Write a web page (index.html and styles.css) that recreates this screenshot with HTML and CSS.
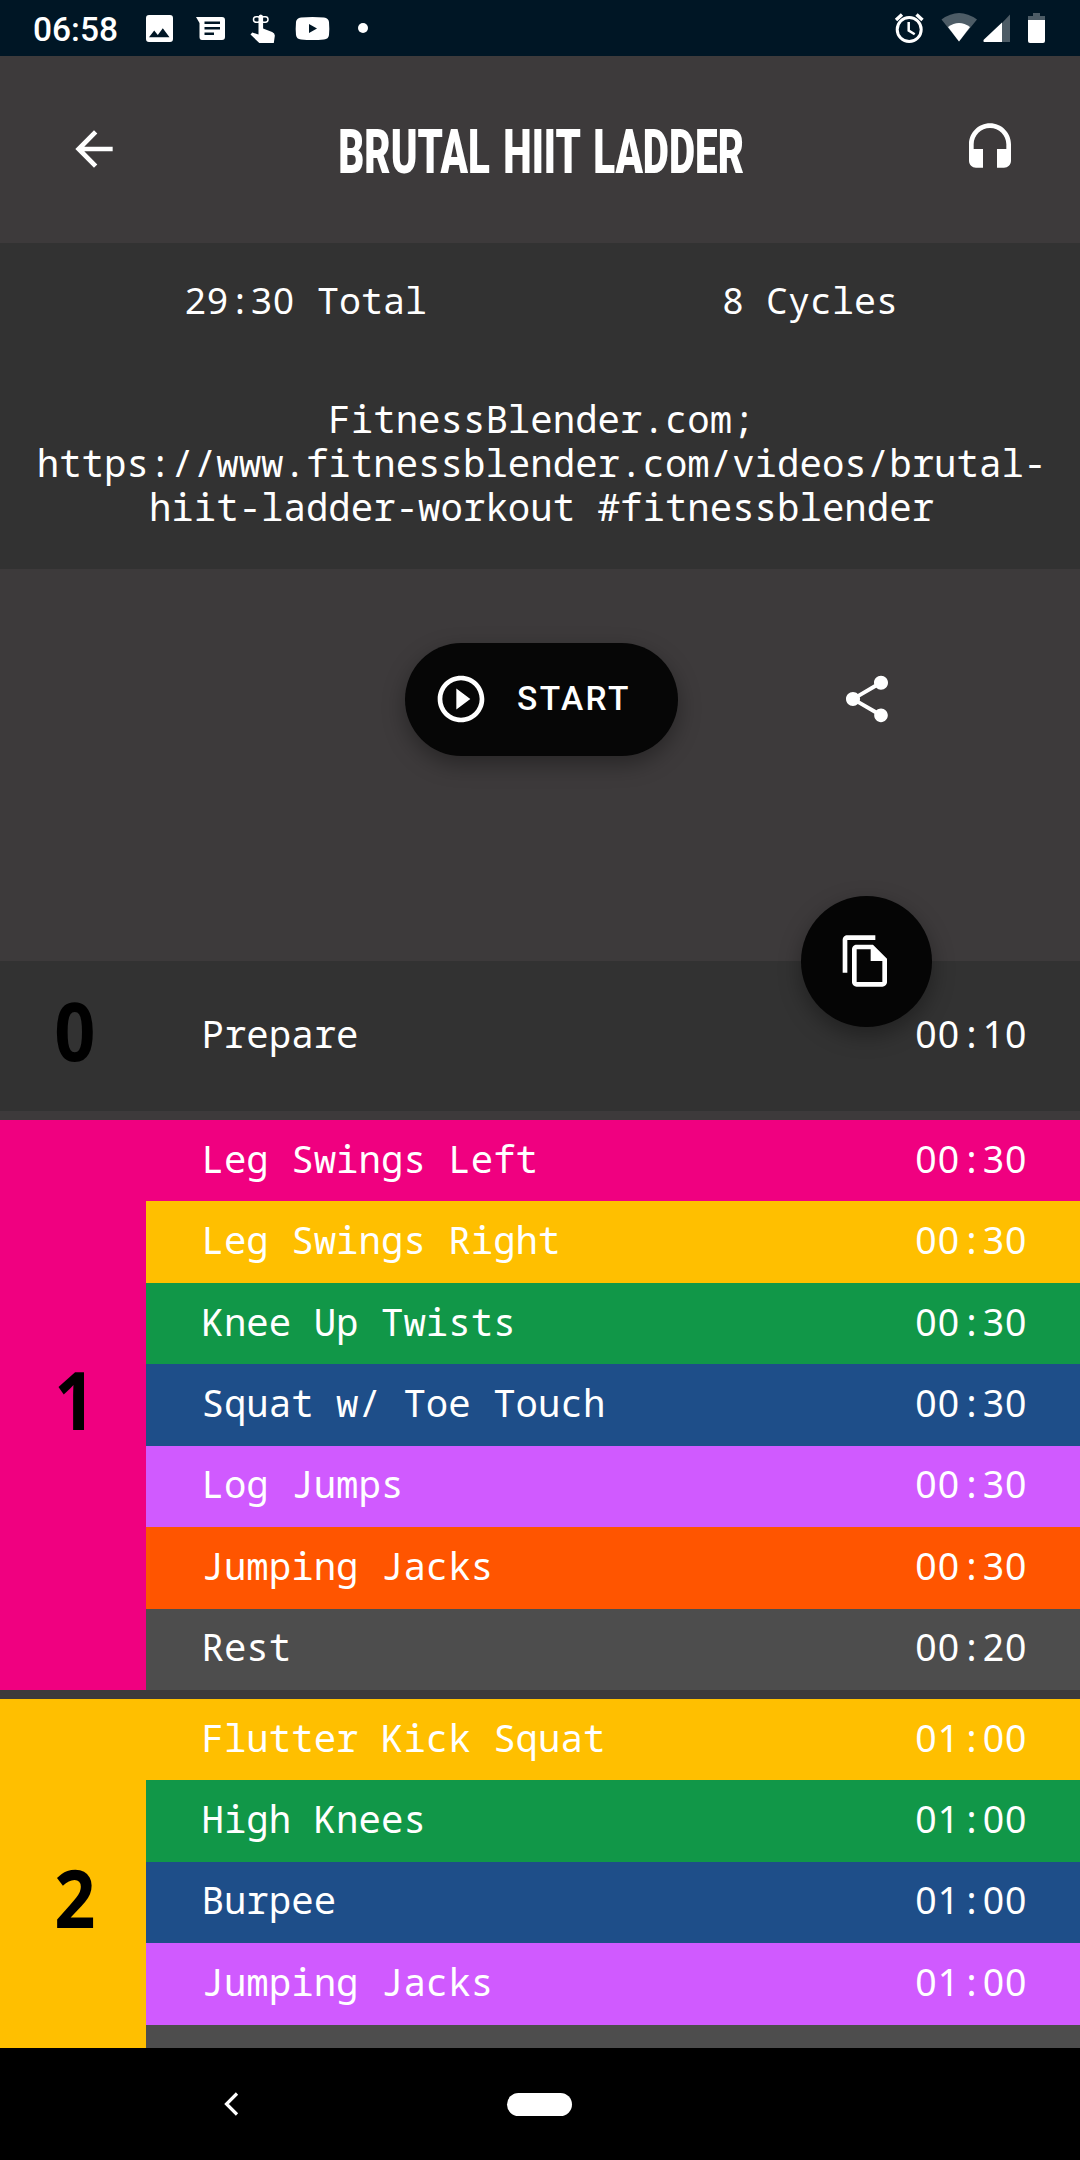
FILE: index.html
```html
<!DOCTYPE html>
<html lang="en">
<head>
<meta charset="utf-8">
<title>Brutal HIIT Ladder</title>
<link rel="stylesheet" href="styles.css">
</head>
<body>
<div class="status">
  <span class="clock">06:58</span>
  <svg class="notif" width="300" height="56" viewBox="140 0 300 56">
    <path fill-rule="evenodd" d="M149 15h21q3 0 3 3v21q0 3-3 3h-21q-3 0-3-3V18q0-3 3-3zM149 37.300h20.500l-6.700-9-5 6.600-3.600-4.300z"/>
    <path fill-rule="evenodd" d="M196 17h26q3 0 3 3v17q0 3-3 3h-20q-2.500 0-2.500-3V23zM204.500 21.500v2.500h15.500v-2.500zM204.500 27v2.500h15.500v-2.500zM204.500 32.500v2.500h9.500v-2.500z"/>
    <path d="M258.500 22v-5q0-2.500 2.300-2.500t2.300 2.500v11.500l9 3.500q3 1.200 2.700 4l-1 7h-14.500l-8.800-8.500 1.800-2 6.200 2z"/>
    <g fill="none" stroke="#fff" stroke-width="1.500"><rect x="253.500" y="16.800" width="7" height="5.500" rx="2.700"/><rect x="261" y="16.800" width="7" height="5.500" rx="2.700"/></g>
    <path fill-rule="evenodd" d="M301 17.500q11.500-1 23 0 4.500.5 5 4.500.6 6.500 0 13-.5 4-5 4.500-11.500 1-23 0-4.500-.5-5-4.500-.6-6.500 0-13 .5-4 5-4.500zM309 24v9l8-4.500z"/>
    <circle cx="363" cy="28" r="5"/>
  </svg>
  <svg class="system" width="160" height="56" viewBox="890 0 160 56">
    <g fill="none" stroke="#fff" stroke-width="3"><circle cx="909.200" cy="29.500" r="12"/><path d="M896 20l6-5.500M922.500 20l-6-5.500" stroke-width="3.400"/><path d="M908.700 22v8.500l6 3.700" stroke-width="2.500"/></g>
    <path fill="#4d5c66" d="M941.500 19.500q17.500-13 35.500 0L959 41.500z"/>
    <path d="M948 27q11-8 22 0l-11 14.500z"/>
    <path fill="#4d5c66" d="M1002 23l8-8.500V42h-8z"/>
    <path d="M1002 22.500V42h-18q-1.500-1 0-2.500z"/>
    <path fill="#4d5c66" d="M1033 13h7v3h5v4h-17v-4h5z"/>
    <path d="M1028 20h17v21q0 2-2 2h-13q-2 0-2-2z"/>
  </svg>
</div>

<header class="appbar">
  <svg class="icon" viewBox="0 0 24 24"><path d="M20 11H7.830l5.590-5.590L12 4l-8 8 8 8 1.410-1.410L7.830 13H20v-2z"/></svg>
  <h1 class="title">BRUTAL HIIT LADDER</h1>
  <svg class="icon" viewBox="0 0 24 24"><path d="M12 1c-4.970 0-9 4.030-9 9v7c0 1.660 1.340 3 3 3h3v-8H5v-2c0-3.870 3.130-7 7-7s7 3.130 7 7v2h-4v8h3c1.660 0 3-1.340 3-3v-7c0-4.970-4.030-9-9-9z"/></svg>
</header>

<section class="info">
  <div class="stats"><span><b class="time">29<i>:</i>30</b> Total</span><span>8 Cycles</span></div>
  <p class="desc">FitnessBlender.com;<br>https://www.fitnessblender.com/videos/brutal-<br>hiit-ladder-workout #fitnessblender</p>
</section>

<section class="actions">
  <div class="start"><svg class="icon" viewBox="0 0 24 24"><path d="M10 16.500l6-4.500-6-4.500v9zM12 2C6.480 2 2 6.480 2 12s4.480 10 10 10 10-4.480 10-10S17.520 2 12 2zm0 18c-4.410 0-8-3.590-8-8s3.590-8 8-8 8 3.590 8 8-3.590 8-8 8z"/></svg><span>START</span></div>
  <svg class="icon share" viewBox="0 0 24 24"><path d="M18 16.080c-.76 0-1.440.3-1.960.77L8.910 12.700c.05-.23.09-.46.09-.7s-.04-.47-.09-.7l7.050-4.110c.54.5 1.250.81 2.040.81 1.660 0 3-1.340 3-3s-1.340-3-3-3-3 1.340-3 3c0 .24.04.47.09.7L8.040 9.810C7.500 9.310 6.790 9 6 9c-1.660 0-3 1.340-3 3s1.340 3 3 3c.79 0 1.500-.31 2.040-.81l7.120 4.160c-.05.21-.08.43-.08.65 0 1.610 1.310 2.920 2.920 2.920s2.920-1.310 2.920-2.920-1.310-2.920-2.920-2.920z"/></svg>
</section>

<main class="sets">
  <div class="fab"><svg class="icon" viewBox="0 0 24 24"><path fill-rule="evenodd" d="M16 1H4c-1.100 0-2 .9-2 2v14h2V3h12zM15 5l6 6v10c0 1.100-.9 2-2 2H8c-1.100 0-2-.9-2-2V7c0-1.100.9-2 2-2zM14 7H8v14h11v-9h-5z"/></svg></div>
  <section class="set prepare">
    <div class="num"><span>0</span></div>
    <div class="rows"><div class="row"><span>Prepare</span><b class="time">00<i>:</i>10</b></div></div>
  </section>
  <section class="set pink seven">
    <div class="num"><span>1</span></div>
    <div class="rows">
      <div class="row pink"><span>Leg Swings Left</span><b class="time">00<i>:</i>30</b></div>
      <div class="row yellow"><span>Leg Swings Right</span><b class="time">00<i>:</i>30</b></div>
      <div class="row green"><span>Knee Up Twists</span><b class="time">00<i>:</i>30</b></div>
      <div class="row blue"><span>Squat w/ Toe Touch</span><b class="time">00<i>:</i>30</b></div>
      <div class="row purple"><span>Log Jumps</span><b class="time">00<i>:</i>30</b></div>
      <div class="row orange"><span>Jumping Jacks</span><b class="time">00<i>:</i>30</b></div>
      <div class="row rest"><span>Rest</span><b class="time">00<i>:</i>20</b></div>
    </div>
  </section>
  <section class="set yellow five">
    <div class="num"><span>2</span></div>
    <div class="rows">
      <div class="row yellow"><span>Flutter Kick Squat</span><b class="time">01<i>:</i>00</b></div>
      <div class="row green"><span>High Knees</span><b class="time">01<i>:</i>00</b></div>
      <div class="row blue"><span>Burpee</span><b class="time">01<i>:</i>00</b></div>
      <div class="row purple"><span>Jumping Jacks</span><b class="time">01<i>:</i>00</b></div>
      <div class="row rest"></div>
    </div>
  </section>
</main>

<nav class="navbar">
  <svg class="back" width="20" height="28" viewBox="0 0 20 28"><path d="M16 3.500L5.500 14 16 24.500" fill="none" stroke="#fff" stroke-width="3.200"/></svg>
  <span class="home"></span>
</nav>
</body>
</html>
```

FILE: styles.css
```css
* { box-sizing: border-box; }
body {
  margin: 0;
  width: 1080px;
  height: 2160px;
  overflow: hidden;
  display: flex;
  flex-direction: column;
  background: #3d3a3b;
  color: #fff;
  font-family: "Droid Sans Mono", "Noto Sans Mono", "DejaVu Sans Mono", monospace;
  font-size: 37.400px;
  line-height: 44px;
}
svg { display: block; fill: #fff; flex: none; }
.icon { width: 56px; height: 56px; }
.status {
  height: 56px;
  flex: none;
  display: flex;
  background: #001625;
  padding: 0 30px 0 33px;
}
.clock {
  width: 107px;
  font: 500 33.500px/60px Roboto, sans-serif;
}
.system { margin-left: auto; }
.appbar {
  height: 187px;
  flex: none;
  display: flex;
  justify-content: space-between;
  align-items: flex-start;
  padding: 65px 62px 0 66px;
}
.title {
  margin: 2px 0 0;
  font: 900 60.500px/60px Roboto, sans-serif;
  white-space: nowrap;
  word-spacing: 5px;
  transform: translateX(-1px) scaleX(.667);
}
.time {
  font-family: "Noto Sans", sans-serif;
  font-weight: 400;
  letter-spacing: .028em;
}
.time i {
  display: inline-block;
  width: .6em;
  text-align: center;
  font-style: normal;
  letter-spacing: 0;
}
.info {
  height: 326px;
  flex: none;
  background: #323232;
}
.stats {
  display: flex;
  padding: 35px 18px 0 54px;
  font-size: 36.700px;
}
.stats span { flex: 1; text-align: center; }
.desc { margin: 75px -3px 0 0; text-align: center; }
.actions {
  height: 392px;
  flex: none;
  display: flex;
  align-items: flex-start;
  padding: 74px 0 0 405px;
}
.start {
  width: 273px;
  height: 113px;
  display: flex;
  align-items: center;
  gap: 28px;
  padding: 0 0 2px 28px;
  border-radius: 57px;
  background: #060606;
  box-shadow: 0 8px 22px rgba(0, 0, 0, .35);
  font: 500 33.500px/40px Roboto, sans-serif;
  letter-spacing: 2.400px;
}
.share { margin: 28px 0 0 161px; }
.sets {
  position: relative;
  height: 1087px;
  flex: none;
  display: flex;
  flex-direction: column;
  gap: 9px;
}
.fab {
  position: absolute;
  left: 801px;
  top: -65px;
  width: 131px;
  height: 131px;
  border-radius: 50%;
  display: flex;
  align-items: center;
  justify-content: center;
  padding: 0 2px 2px 0;
  background: #050505;
  box-shadow: 0 8px 22px rgba(0, 0, 0, .35);
}
.set { display: flex; flex: none; }
.prepare { height: 150px; background: #323232; }
.seven { height: 570px; }
.five { height: 407px; }
.num {
  width: 146px;
  display: flex;
  align-items: center;
  justify-content: center;
  padding: 0 0 12px 3px;
  color: #000;
  font: 700 80px/80px "Noto Sans", sans-serif;
}
.num span { transform: scaleX(.9); }
.rows { flex: 1; display: grid; grid-auto-rows: 1fr; }
.row {
  display: flex;
  align-items: center;
  justify-content: space-between;
  padding: 0 52.500px 4px 55.500px;
}
.pink { background: #f00080; }
.yellow { background: #ffbf00; }
.green { background: #119748; }
.blue { background: #1e4e89; }
.purple { background: #d05aff; }
.orange { background: #ff5500; }
.rest { background: #4d4d4d; }
/* sits above the list, which scrolls underneath it */
.navbar {
  position: relative;
  height: 112px;
  flex: none;
  display: flex;
  align-items: center;
  padding-left: 221px;
  background: #000;
}
.home {
  width: 65px;
  height: 23px;
  margin-left: 266px;
  border-radius: 12px;
  background: #fff;
}
```
